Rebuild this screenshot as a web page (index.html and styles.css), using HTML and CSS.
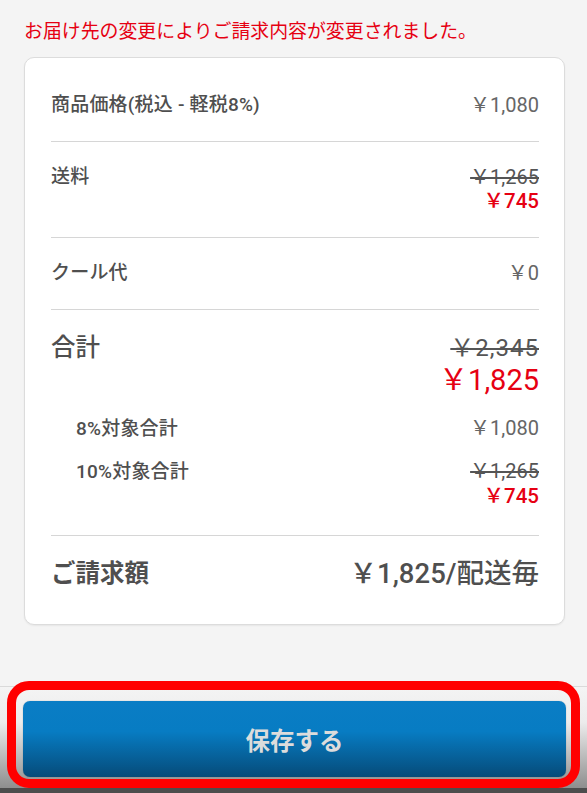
FILE: index.html
```html
<!DOCTYPE html>
<html lang="ja">
<head>
<meta charset="utf-8">
<link rel="stylesheet" href="styles.css">
</head>
<body>
<main class="main">
  <p class="notice">お届け先の変更によりご請求内容が変更されました。</p>
  <section class="card">
    <div class="row row-first">
      <span class="label">商品価格(税込 - 軽税8%)</span>
      <span class="value">￥1,080</span>
    </div>
    <div class="row">
      <span class="label">送料</span>
      <span class="prices"><s class="old">￥1,265</s><span class="new">￥745</span></span>
    </div>
    <div class="row">
      <span class="label">クール代</span>
      <span class="value">￥0</span>
    </div>
    <div class="total">
      <div class="total-head">
        <span class="total-label">合計</span>
        <span class="prices"><s class="old-lg">￥2,345</s><span class="new-lg">￥1,825</span></span>
      </div>
      <div class="sub sub-first">
        <span class="label">8%対象合計</span>
        <span class="value">￥1,080</span>
      </div>
      <div class="sub">
        <span class="label">10%対象合計</span>
        <span class="prices"><s class="old">￥1,265</s><span class="new">￥745</span></span>
      </div>
    </div>
    <div class="bill">
      <span class="bill-label">ご請求額</span>
      <span class="bill-value">￥1,825/配送毎</span>
    </div>
  </section>
</main>
<footer class="footer">
  <button class="save">保存する</button>
  <div class="highlight"></div>
</footer>
</body>
</html>
```
FILE: styles.css
```css
html, body {
  margin: 0;
  padding: 0;
}
body {
  width: 587px;
  height: 793px;
  overflow: hidden;
  display: flex;
  flex-direction: column;
  background: #f4f4f4;
  font-family: Roboto, "Noto Sans CJK JP", sans-serif;
  color: #555;
}
.main {
  padding: 17px 22px 0 24px;
}
.notice {
  margin: 0 0 14px;
  font-size: 18.9px;
  line-height: 26px;
  color: #e60012;
  font-family: "Noto Sans CJK JP", sans-serif;
}
.card {
  background: #fff;
  border: 1px solid #dcdcdc;
  border-radius: 10px;
  box-shadow: 0 1px 2px rgba(0,0,0,0.06);
  padding: 12px 25px 0 26px;
}
.row {
  display: flex;
  justify-content: space-between;
  align-items: flex-start;
  padding: 23px 0 24px;
  border-bottom: 1px solid #d6d6d6;
  line-height: 24px;
}
.label {
  font-size: 19px;
  font-weight: 500;
  color: #4f4f4f;
  letter-spacing: 0.2px;
}
.value {
  font-size: 20px;
  color: #666;
}
.prices {
  display: flex;
  flex-direction: column;
  align-items: flex-end;
}
.old {
  font-size: 20px;
  color: #555;
  text-decoration: line-through;
  text-decoration-thickness: 1.5px;
}
.new {
  font-size: 20.5px;
  font-weight: 500;
  color: #e60012;
}
.total {
  padding: 22px 0 26px;
  border-bottom: 1px solid #d6d6d6;
}
.total-head {
  display: flex;
  justify-content: space-between;
  align-items: flex-start;
  line-height: 32px;
}
.total-label {
  font-size: 24.5px;
  font-weight: 500;
  color: #4f4f4f;
}
.old-lg {
  font-size: 24px;
  color: #555;
  letter-spacing: 1px;
  text-decoration: line-through;
  text-decoration-thickness: 2px;
}
.new-lg {
  font-size: 29px;
  color: #e60012;
}
.sub {
  display: flex;
  justify-content: space-between;
  align-items: flex-start;
  padding-left: 25px;
  line-height: 25px;
  margin-top: 18px;
}
.sub-first {
  margin-top: 20px;
}
.bill {
  display: flex;
  justify-content: space-between;
  align-items: center;
  padding: 22px 0 34px;
  line-height: 32px;
}
.bill-label {
  font-size: 24.5px;
  font-weight: 700;
  color: #4f4f4f;
}
.bill-value {
  font-size: 27.5px;
  font-weight: 500;
  color: #4f4f4f;
}
.footer {
  margin-top: auto;
  position: relative;
  border-top: 1px solid #dadada;
  border-bottom: 5px solid #4d4d4d;
  padding: 14px 21px 11px 23px;
  background: linear-gradient(#f4f4f4 0%, #ececec 35%, #8e8e8e 100%);
}
.save {
  display: block;
  width: 100%;
  height: 76px;
  border: none;
  border-radius: 7px;
  background: linear-gradient(#0a7dc5 0%, #077cc3 40%, #064b79 100%);
  color: #dcdcdc;
  font-family: "Noto Sans CJK JP", sans-serif;
  font-size: 24.5px;
  font-weight: 700;
  box-shadow: 0 0 1px rgba(0,0,0,0.4);
}
.highlight {
  position: absolute;
  left: 7px;
  top: -6px;
  width: 573px;
  height: 107px;
  box-sizing: border-box;
  border: 9px solid #ff0000;
  border-radius: 22px;
  pointer-events: none;
}
```
